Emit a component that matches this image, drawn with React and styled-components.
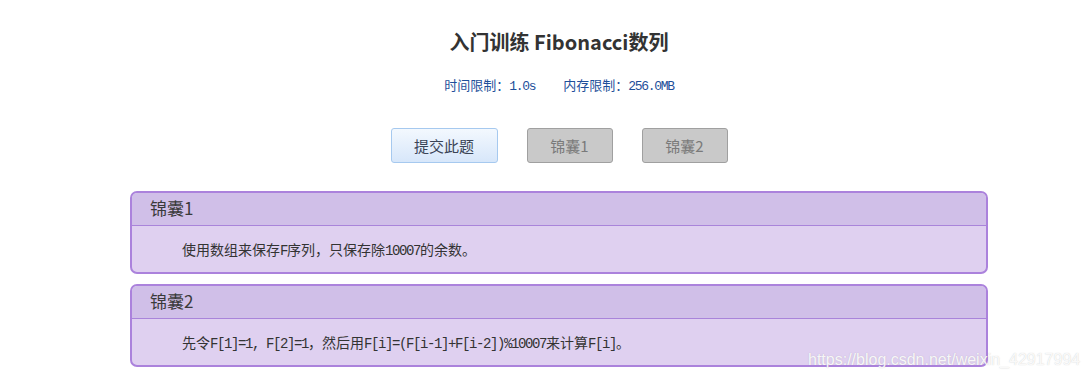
import React from "react";
import styled, { createGlobalStyle } from "styled-components";

const GlobalStyle = createGlobalStyle`
    body {
        margin: 0;
        background: #fff;
        font-family: "Noto Sans CJK SC", "Liberation Sans", sans-serif;
    }
`;

const tips = [
    { title: "锦囊1", text: "使用数组来保存F序列，只保存除10007的余数。" },
    { title: "锦囊2", text: "先令F[1]=1, F[2]=1，然后用F[i]=(F[i-1]+F[i-2])%10007来计算F[i]。" },
];

// ascii runs get a narrower mono face so they take half a CJK cell
const renderMixed = (text) =>
    text.split(/([\x20-\x7e]+)/).map((part, i) =>
        /^[\x20-\x7e]+$/.test(part) ? <Latin key={i}>{part}</Latin> : part
    );

function App() {
    return (
        <Page>
            <GlobalStyle />
            <Content>
                <Title>入门训练 Fibonacci数列</Title>
                <Limits>
                    <span>时间限制：<Latin>1.0s</Latin></span>
                    <span>内存限制：<Latin>256.0MB</Latin></span>
                </Limits>
                <Toolbar>
                    <Button $primary $width={107}>提交此题</Button>
                    <Button $width={86}>锦囊1</Button>
                    <Button $width={86}>锦囊2</Button>
                </Toolbar>
                <Panels>
                    {tips.map((t) => (
                        <Panel key={t.title}>
                            <PanelHeader>{t.title}</PanelHeader>
                            <PanelBody>{renderMixed(t.text)}</PanelBody>
                        </Panel>
                    ))}
                </Panels>
            </Content>
            <Watermark>https://blog.csdn.net/weixin_42917994</Watermark>
        </Page>
    );
}

const Page = styled.div`
    position: relative;
    width: 1089px;
    height: 382px;
    overflow: hidden;
`;

const Content = styled.div`
    width: 858px;
    margin-left: 130px;
    padding-top: 30px;
    display: flex;
    flex-direction: column;
    align-items: center;
`;

const Title = styled.h1`
    margin: 0;
    font-size: 20px;
    line-height: 24px;
    font-weight: 700;
    color: #333;
`;

const Latin = styled.span`
    font-family: "Liberation Mono", monospace;
    font-size: 1em;
    letter-spacing: -0.1em;
    line-height: 1;
`;

const Limits = styled.div`
    margin-top: 23px;
    height: 16px;
    display: flex;
    align-items: center;
    gap: 28px;
    font-family: "Noto Sans CJK SC", sans-serif;
    font-size: 13px;
    line-height: 16px;
    color: #1e4f9a;
`;

const Toolbar = styled.div`
    margin-top: 35px;
    display: flex;
    gap: 29px;
`;

const Button = styled.button`
    width: ${(p) => p.$width}px;
    height: 35px;
    padding: 0;
    border-radius: 3px;
    font-family: "Noto Sans CJK SC", "Liberation Sans", sans-serif;
    font-size: 15px;
    border: 1px solid ${(p) => (p.$primary ? "#a6c9ef" : "#a0a0a0")};
    background: ${(p) =>
        p.$primary ? "linear-gradient(#f3f8fe, #d7e7fa)" : "#c9c9c9"};
    color: ${(p) => (p.$primary ? "#3a4456" : "#7a7a7a")};
`;

const Panels = styled.div`
    margin-top: 28px;
    width: 100%;
    display: flex;
    flex-direction: column;
    gap: 10px;
`;

const Panel = styled.div`
    border: 2px solid #ab82dc;
    border-radius: 7px;
    overflow: hidden;
    background: #dfd0f0;
`;

const PanelHeader = styled.div`
    height: 32px;
    line-height: 30px;
    padding-left: 18px;
    background: #d0bfe8;
    border-bottom: 1px solid #a984da;
    font-size: 17px;
    color: #3a3a3a;
`;

const PanelBody = styled.div`
    height: 46px;
    line-height: 46px;
    padding-left: 50px;
    font-family: "Noto Sans CJK SC", sans-serif;
    font-size: 14px;
    color: #333;
    white-space: nowrap;
`;

const Watermark = styled.div`
    position: absolute;
    left: 808px;
    top: 351px;
    font-family: "Liberation Sans", sans-serif;
    font-size: 16px;
    color: rgba(255, 255, 255, 0.9);
    text-shadow: 0 0 1px rgba(150, 150, 150, 0.5);
`;

export default App;
